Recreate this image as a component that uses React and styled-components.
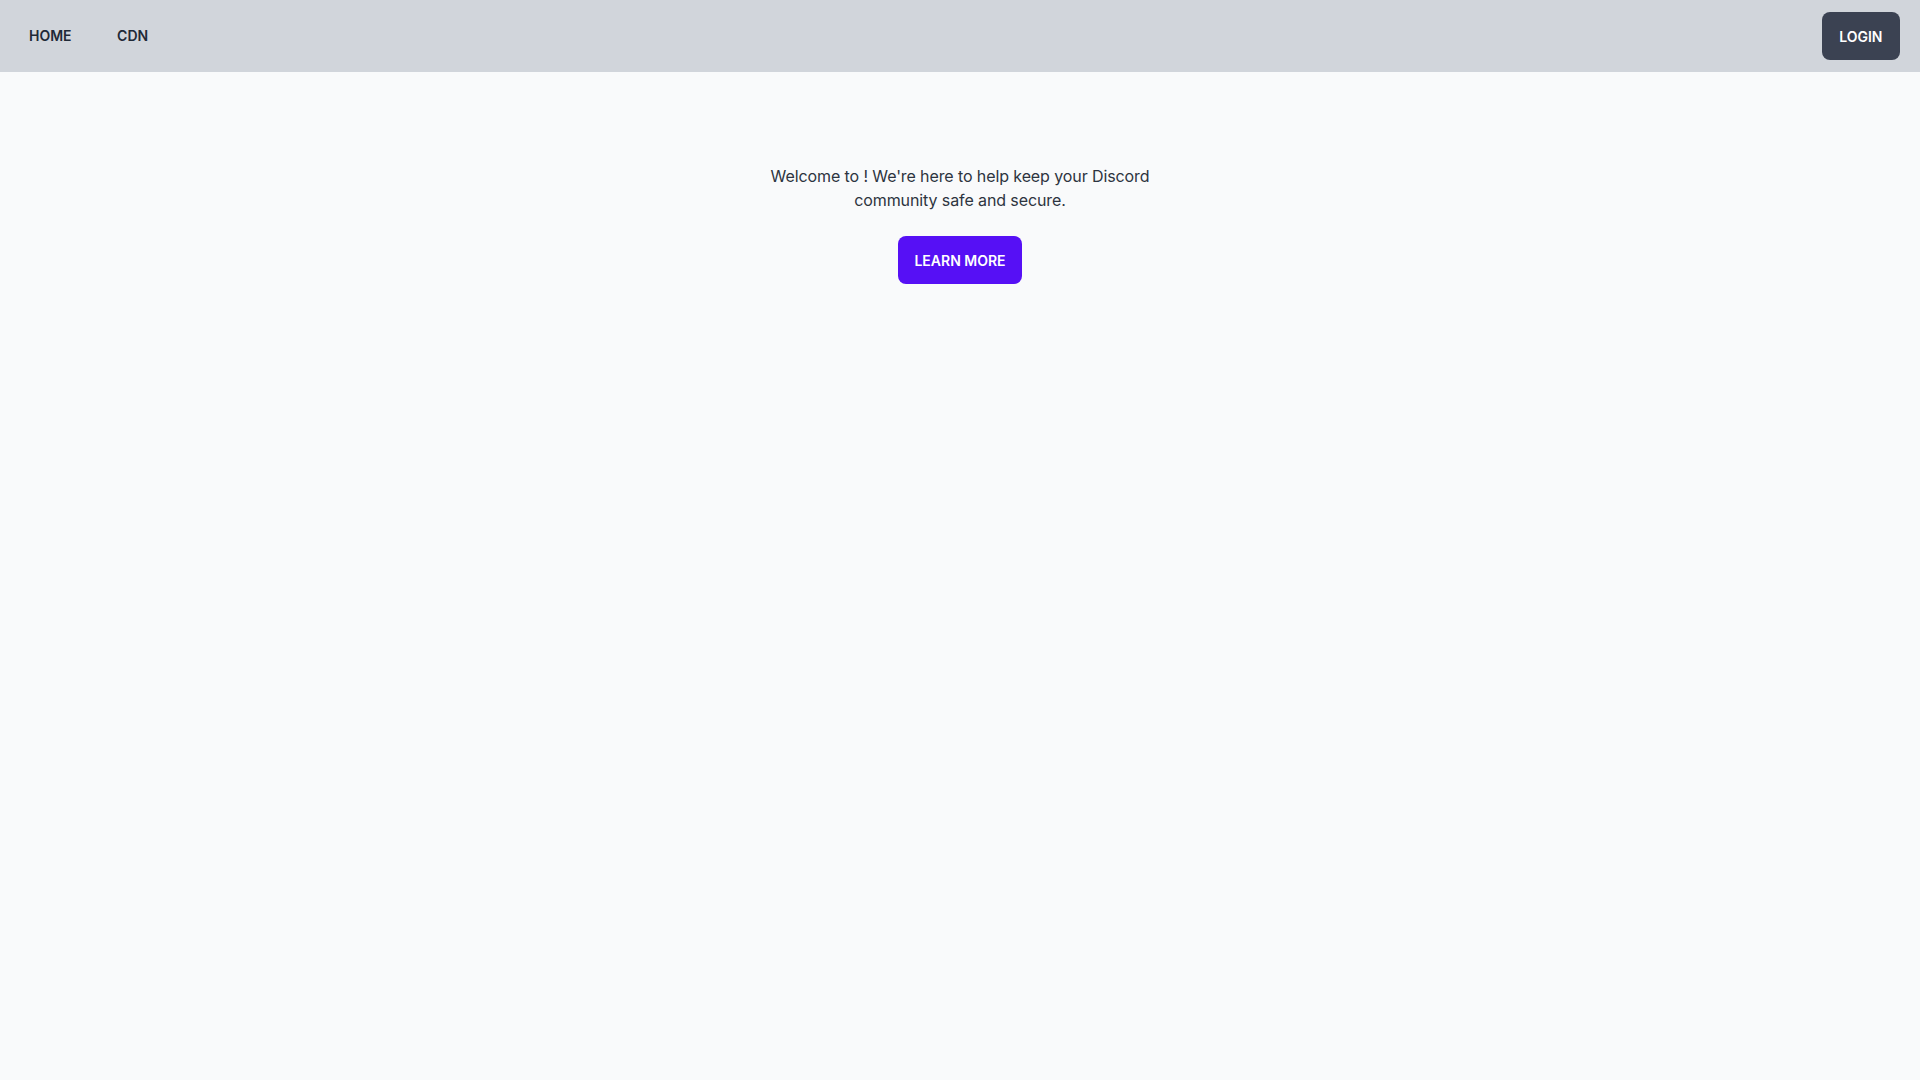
import styled, { createGlobalStyle } from 'styled-components';

const GlobalStyle = createGlobalStyle`
  html, body {
    margin: 0;
    padding: 0;
    background: #f9fafb;
    font-family: Inter, "Noto Sans", sans-serif;
    color: #1f2937;
  }
  #root {
    min-height: 100vh;
  }
`

const Header = styled.header`
  height: 72px;
  background: #d1d5db;
  display: flex;
  align-items: center;
  justify-content: space-between;
  padding: 0 20px 0 13px;
  box-sizing: border-box;
`

const Nav = styled.nav`
  display: flex;
  align-items: center;
  gap: 13.5px;
`

const NavLink = styled.a`
  padding: 0 16px;
  font-size: 14px;
  font-weight: 600;
  color: #1f2937;
  text-decoration: none;
  line-height: 20px;
`

const Button = styled.a`
  display: inline-flex;
  align-items: center;
  justify-content: center;
  height: 48px;
  padding: 0 ${p => p.$variant === 'primary' ? '16px' : '17.5px'};
  box-sizing: border-box;
  border-radius: 8px;
  font-size: 14px;
  font-weight: 600;
  color: #fff;
  text-decoration: none;
  background: ${p => p.$variant === 'primary' ? '#5610f5' : '#3b4252'};
`

const Hero = styled.main`
  display: flex;
  flex-direction: column;
  align-items: center;
  padding-top: 92px;
`

const Intro = styled.p`
  max-width: 448px;
  margin: 0 0 24px;
  text-align: center;
  font-size: 16px;
  line-height: 24px;
  letter-spacing: -0.1px;
  color: #2d3440;
`

function App() {
  return (
    <>
      <GlobalStyle />
      <Header>
        <Nav>
          <NavLink href="#">HOME</NavLink>
          <NavLink href="#">CDN</NavLink>
        </Nav>
        <Button href="#">LOGIN</Button>
      </Header>
      <Hero>
        <Intro>Welcome to ! We're here to help keep your Discord community safe and secure.</Intro>
        <Button $variant="primary" href="#">LEARN MORE</Button>
      </Hero>
    </>
  );
}

export default App;
